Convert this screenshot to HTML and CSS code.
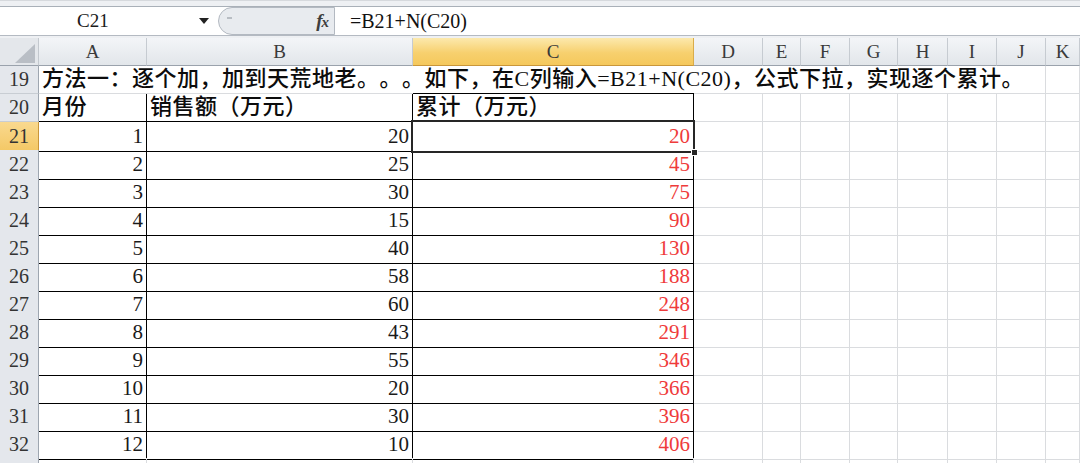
FILE: index.html
```html
<!DOCTYPE html>
<html>
<head lang="zh">
    <meta charset="UTF-8">
    <title>累计</title>
    <link rel="stylesheet" href="styles.css">
</head>
<body>

<!--编辑栏-->
<div class="formula-bar">
    <div class="fb">
        <div class="name-box">
            <span class="name">C21</span>
            <span class="drop"></span>
        </div>
        <div class="fx-box">
            <span class="grip"></span>
            <span class="fx"><i>f</i><i class="x">x</i></span>
        </div>
        <div class="formula">=B21+N(C20)</div>
    </div>
</div>

<!--表格-->
<div class="sheet">
    <div class="row head">
        <div class="corner"><svg width="20" height="19" viewBox="0 0 20 19"><polygon points="20,0 20,19 0,19" fill="#b9bec5"/></svg></div>
        <div class="ch">A</div>
        <div class="ch">B</div>
        <div class="ch on">C</div>
        <div class="ch">D</div>
        <div class="ch">E</div>
        <div class="ch">F</div>
        <div class="ch">G</div>
        <div class="ch">H</div>
        <div class="ch">I</div>
        <div class="ch">J</div>
        <div class="ch">K</div>
    </div>

    <div class="row">
        <div class="rh">19</div>
        <div class="c txt wide">方法一：逐个加，加到天荒地老。。。如下，在C列输入=B21+N(C20)，公式下拉，实现逐个累计。</div>
        <div class="c"></div>
    </div>

    <div class="row">
        <div class="rh">20</div>
        <div class="c txt bd">月份</div>
        <div class="c txt bd">销售额（万元）</div>
        <div class="c txt bd top">累计（万元）</div>
        <div class="c"></div><div class="c"></div><div class="c"></div><div class="c"></div>
        <div class="c"></div><div class="c"></div><div class="c"></div><div class="c"></div>
    </div>

    <div class="row">
        <div class="rh on">21</div>
        <div class="c num bd">1</div>
        <div class="c num bd">20</div>
        <div class="c num bd red act">20<span class="sel"><span class="handle"></span></span></div>
        <div class="c"></div><div class="c"></div><div class="c"></div><div class="c"></div>
        <div class="c"></div><div class="c"></div><div class="c"></div><div class="c"></div>
    </div>

    <div class="row">
        <div class="rh">22</div>
        <div class="c num bd">2</div>
        <div class="c num bd">25</div>
        <div class="c num bd red">45</div>
        <div class="c"></div><div class="c"></div><div class="c"></div><div class="c"></div>
        <div class="c"></div><div class="c"></div><div class="c"></div><div class="c"></div>
    </div>

    <div class="row">
        <div class="rh">23</div>
        <div class="c num bd">3</div>
        <div class="c num bd">30</div>
        <div class="c num bd red">75</div>
        <div class="c"></div><div class="c"></div><div class="c"></div><div class="c"></div>
        <div class="c"></div><div class="c"></div><div class="c"></div><div class="c"></div>
    </div>

    <div class="row">
        <div class="rh">24</div>
        <div class="c num bd">4</div>
        <div class="c num bd">15</div>
        <div class="c num bd red">90</div>
        <div class="c"></div><div class="c"></div><div class="c"></div><div class="c"></div>
        <div class="c"></div><div class="c"></div><div class="c"></div><div class="c"></div>
    </div>

    <div class="row">
        <div class="rh">25</div>
        <div class="c num bd">5</div>
        <div class="c num bd">40</div>
        <div class="c num bd red">130</div>
        <div class="c"></div><div class="c"></div><div class="c"></div><div class="c"></div>
        <div class="c"></div><div class="c"></div><div class="c"></div><div class="c"></div>
    </div>

    <div class="row">
        <div class="rh">26</div>
        <div class="c num bd">6</div>
        <div class="c num bd">58</div>
        <div class="c num bd red">188</div>
        <div class="c"></div><div class="c"></div><div class="c"></div><div class="c"></div>
        <div class="c"></div><div class="c"></div><div class="c"></div><div class="c"></div>
    </div>

    <div class="row">
        <div class="rh">27</div>
        <div class="c num bd">7</div>
        <div class="c num bd">60</div>
        <div class="c num bd red">248</div>
        <div class="c"></div><div class="c"></div><div class="c"></div><div class="c"></div>
        <div class="c"></div><div class="c"></div><div class="c"></div><div class="c"></div>
    </div>

    <div class="row">
        <div class="rh">28</div>
        <div class="c num bd">8</div>
        <div class="c num bd">43</div>
        <div class="c num bd red">291</div>
        <div class="c"></div><div class="c"></div><div class="c"></div><div class="c"></div>
        <div class="c"></div><div class="c"></div><div class="c"></div><div class="c"></div>
    </div>

    <div class="row">
        <div class="rh">29</div>
        <div class="c num bd">9</div>
        <div class="c num bd">55</div>
        <div class="c num bd red">346</div>
        <div class="c"></div><div class="c"></div><div class="c"></div><div class="c"></div>
        <div class="c"></div><div class="c"></div><div class="c"></div><div class="c"></div>
    </div>

    <div class="row">
        <div class="rh">30</div>
        <div class="c num bd">10</div>
        <div class="c num bd">20</div>
        <div class="c num bd red">366</div>
        <div class="c"></div><div class="c"></div><div class="c"></div><div class="c"></div>
        <div class="c"></div><div class="c"></div><div class="c"></div><div class="c"></div>
    </div>

    <div class="row">
        <div class="rh">31</div>
        <div class="c num bd">11</div>
        <div class="c num bd">30</div>
        <div class="c num bd red">396</div>
        <div class="c"></div><div class="c"></div><div class="c"></div><div class="c"></div>
        <div class="c"></div><div class="c"></div><div class="c"></div><div class="c"></div>
    </div>

    <div class="row">
        <div class="rh">32</div>
        <div class="c num bd">12</div>
        <div class="c num bd">10</div>
        <div class="c num bd red">406</div>
        <div class="c"></div><div class="c"></div><div class="c"></div><div class="c"></div>
        <div class="c"></div><div class="c"></div><div class="c"></div><div class="c"></div>
    </div>

    <!--只露出一点的第33行-->
    <div class="row">
        <div class="rh"></div>
        <div class="c"></div><div class="c"></div><div class="c"></div><div class="c"></div>
        <div class="c"></div><div class="c"></div><div class="c"></div><div class="c"></div>
        <div class="c"></div><div class="c"></div><div class="c"></div>
    </div>
</div>

</body>
</html>
```

FILE: styles.css
```css
* {
    padding: 0px;
    margin: 0px;
    box-sizing: border-box;
}

body {
    width: 1080px;
    height: 463px;
    overflow: hidden;
    background: #ffffff;
    font-family: "Liberation Serif", "Noto Sans CJK SC", serif;
    color: #111111;
    text-spacing-trim: space-all;
}

/* 编辑栏 */
.formula-bar {
    height: 38px;
    padding: 5px 0px 3px 0px;
    background: #eef0f3;
    border-top: 1px solid #d6d9dd;
}

.fb {
    height: 30px;
    display: flex;
    background: #ffffff;
    border-top: 1px solid #a9b0b8;
    border-bottom: 1px solid #b4bac2;
}

.name-box {
    width: 218px;
    display: flex;
    align-items: center;
    padding-left: 77px;
}

.name {
    font-size: 19px;
    color: #1a1a1a;
}

.drop {
    margin-left: auto;
    margin-right: 9px;
    width: 0px;
    height: 0px;
    border-left: 5px solid transparent;
    border-right: 5px solid transparent;
    border-top: 6px solid #222222;
}

.fx-box {
    width: 117px;
    display: flex;
    align-items: center;
    background: #e8ebef;
    border: 1px solid #b3b9c1;
    border-radius: 14px 0px 0px 14px;
    padding-left: 8px;
    padding-right: 6px;
}

.grip {
    width: 5px;
    height: 2px;
    margin-bottom: 6px;
    background: #b8bdc3;
}

.fx {
    margin-left: auto;
    font-size: 19px;
    font-weight: bold;
    color: #3e3e3e;
    letter-spacing: -1px;
}

.fx .x {
    font-size: 15px;
}

.formula {
    flex: 1;
    display: flex;
    align-items: center;
    padding-left: 15px;
    font-size: 20px;
    color: #111111;
}

/* 表格 */
.row {
    display: grid;
    grid-template-columns: 39px 108px 266px 281px 69px 38px 49px 48px 50px 49px 49px 1fr;
    height: 28px;
}

.corner {
    display: flex;
    align-items: flex-end;
    justify-content: flex-end;
    padding: 0px 3px 2px 0px;
    background: #e4e7eb;
    border-right: 1px solid #c3c8ce;
    border-bottom: 1px solid #9aa2ac;
}

.ch {
    display: flex;
    align-items: center;
    justify-content: center;
    font-size: 19px;
    color: #3a3a3a;
    background: linear-gradient(#f3f5f8, #e2e6ea);
    border-right: 1px solid #c6cbd1;
    border-bottom: 1px solid #9aa2ac;
}

.ch.on {
    background: linear-gradient(#fce9ad, #f7d06e 55%, #f5c85c);
    border-right-color: #d9ac4a;
    border-bottom-color: #c9963a;
}

.rh {
    display: flex;
    align-items: center;
    justify-content: center;
    font-size: 20px;
    color: #333333;
    background: #e4e7ec;
    border-right: 1px solid #9ea6b0;
    border-bottom: 1px solid #c8cdd3;
}

.rh.on {
    background: linear-gradient(#f9d98f, #f4c865);
    border-bottom-color: #d6a64a;
    border-right-color: #c9963a;
}

.c {
    border-right: 1px solid #dadcdf;
    border-bottom: 1px solid #dadcdf;
    white-space: nowrap;
}

.wide {
    grid-column: span 10;
}

.txt {
    padding-left: 3px;
    font-size: 22px;
    line-height: 26px;
    letter-spacing: 0.5px;
    font-weight: 500;
    color: #0c0c0c;
}

.num {
    text-align: right;
    padding-right: 3px;
    font-size: 21px;
    line-height: 29px;
    color: #1a1a1a;
}

.red {
    color: #ef3b3b;
}

.bd {
    border-right-color: #000000;
    border-bottom-color: #000000;
}

.top {
    box-shadow: 0px -1px 0px #000000;
}

/* 当前单元格 */
.act {
    position: relative;
}

.sel {
    position: absolute;
    left: -2px;
    top: -2px;
    right: -2px;
    bottom: -2px;
    border: 2px solid #262626;
    box-shadow: inset 0px 0px 0px 1px #ffffff;
    z-index: 2;
}

.handle {
    position: absolute;
    right: -5px;
    bottom: -5px;
    width: 7px;
    height: 7px;
    background: #262626;
    border: 1px solid #ffffff;
}
```
